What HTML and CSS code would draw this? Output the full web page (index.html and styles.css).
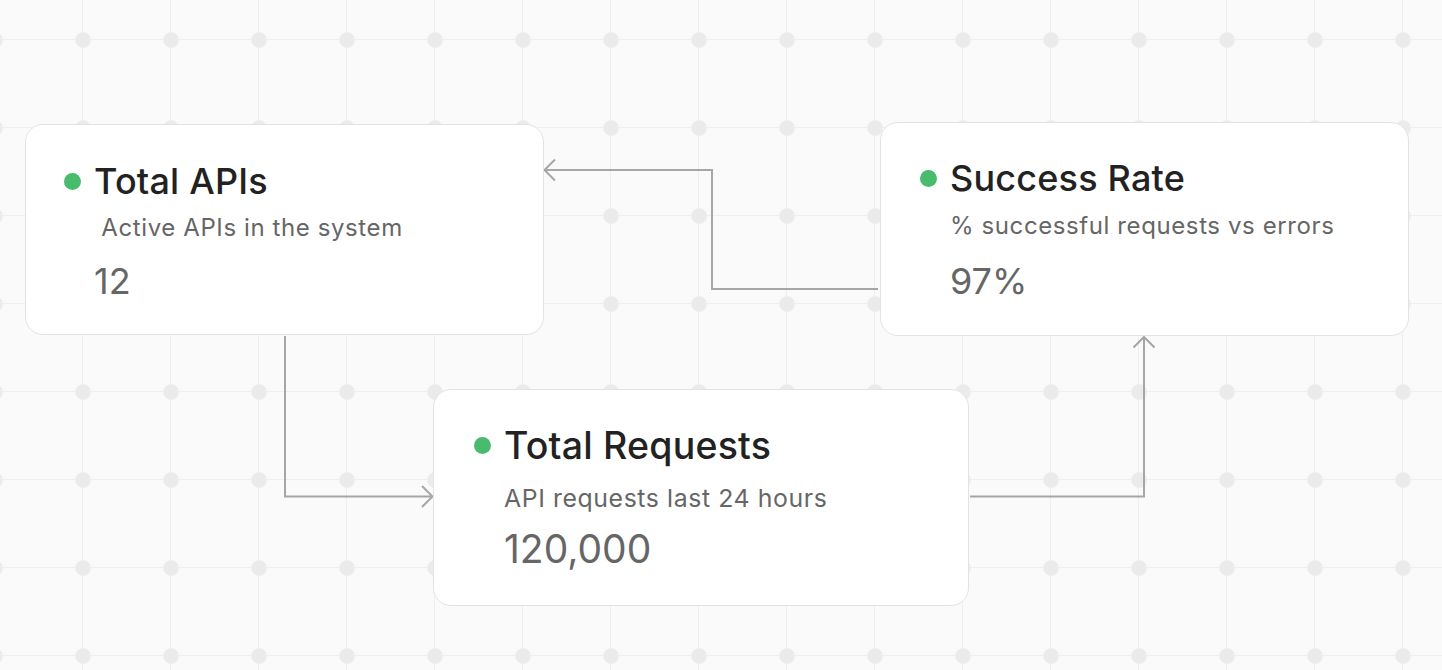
FILE: index.html
```html
<!DOCTYPE html>
<html lang="en">
<head>
<meta charset="utf-8">
<title>API Flow</title>
<link rel="stylesheet" href="styles.css">
</head>
<body>
<main class="canvas">
  <svg class="edges" width="1442" height="670" viewBox="0 0 1442 670" aria-hidden="true">
    <g fill="none" stroke="#a6a6a6" stroke-width="2" stroke-linejoin="miter">
      <path d="M285 336 V496.5 H432"/>
      <path d="M422 486 L432.5 496.5 L422 507"/>
      <path d="M970 496.5 H1144 V337"/>
      <path d="M1133.5 347.5 L1144 337 L1154.5 347.5"/>
      <path d="M878 289 H712 V170 H545"/>
      <path d="M555 159.5 L544.5 170 L555 180.5"/>
    </g>
  </svg>

  <section class="node node-apis">
    <h2 class="node-title"><span class="status"></span>Total APIs</h2>
    <p class="node-desc">&nbsp;Active APIs in the system</p>
    <p class="node-value">12</p>
  </section>

  <section class="node node-success">
    <h2 class="node-title"><span class="status"></span>Success Rate</h2>
    <p class="node-desc">% successful requests vs errors</p>
    <p class="node-value">97%</p>
  </section>

  <section class="node node-requests">
    <h2 class="node-title"><span class="status"></span>Total Requests</h2>
    <p class="node-desc">API requests last 24 hours</p>
    <p class="node-value">120,000</p>
  </section>
</main>
</body>
</html>
```

FILE: styles.css
```css
* { box-sizing: border-box; }

html, body {
  margin: 0;
  padding: 0;
}

body {
  width: 1442px;
  height: 670px;
  overflow: hidden;
  font-family: "Inter", "Liberation Sans", sans-serif;
  background-color: #fafafa;
  background-image:
    radial-gradient(circle at 44px 44px, #ebebeb 7px, rgba(235,235,235,0) 8.5px),
    linear-gradient(to right, #efefef 1px, transparent 1px),
    linear-gradient(to bottom, #efefef 1px, transparent 1px);
  background-size: 88px 88px;
  background-position: 39px -4px, 82px 0, 0 39px;
}

.canvas {
  position: relative;
  width: 1442px;
  height: 670px;
}

.edges {
  position: absolute;
  left: 0;
  top: 0;
}

.node {
  position: absolute;
  background: #ffffff;
  border: 1px solid #e3e3e3;
  border-radius: 18px;
  padding: 34px 20px 0 38px;
  display: flex;
  flex-direction: column;
}

.node-apis { left: 25px; top: 124px; width: 519px; height: 211px; }
.node-success { left: 880px; top: 122px; width: 529px; height: 214px; padding-left: 39px; padding-top: 33px; }
.node-requests { left: 433px; top: 389px; width: 536px; height: 217px; padding-left: 40px; padding-top: 33.5px; }

.node-title {
  margin: 0;
  display: flex;
  align-items: center;
  gap: 13px;
  height: 44px;
  font-size: 36px;
  font-weight: 500;
  color: #222222;
  letter-spacing: 0.2px;
}

.status {
  width: 17px;
  height: 17px;
  border-radius: 50%;
  background: #48bb6c;
  flex: none;
}

.node-desc {
  margin: 10px 0 0 30px;
  font-size: 24px;
  line-height: 30px;
  color: #666666;
  letter-spacing: 0.6px;
}

.node-value {
  margin: 16px 0 0 30px;
  font-size: 36px;
  line-height: 44px;
  color: #666666;
}

.node-success .node-desc { margin-top: 11px; }
.node-success .node-value { margin-top: 18px; }

.node-requests .node-title { font-size: 37.5px; }
.node-requests .node-desc { margin-top: 15.5px; font-size: 24.8px; }
.node-requests .node-value { margin-top: 14px; font-size: 39px; }
```
